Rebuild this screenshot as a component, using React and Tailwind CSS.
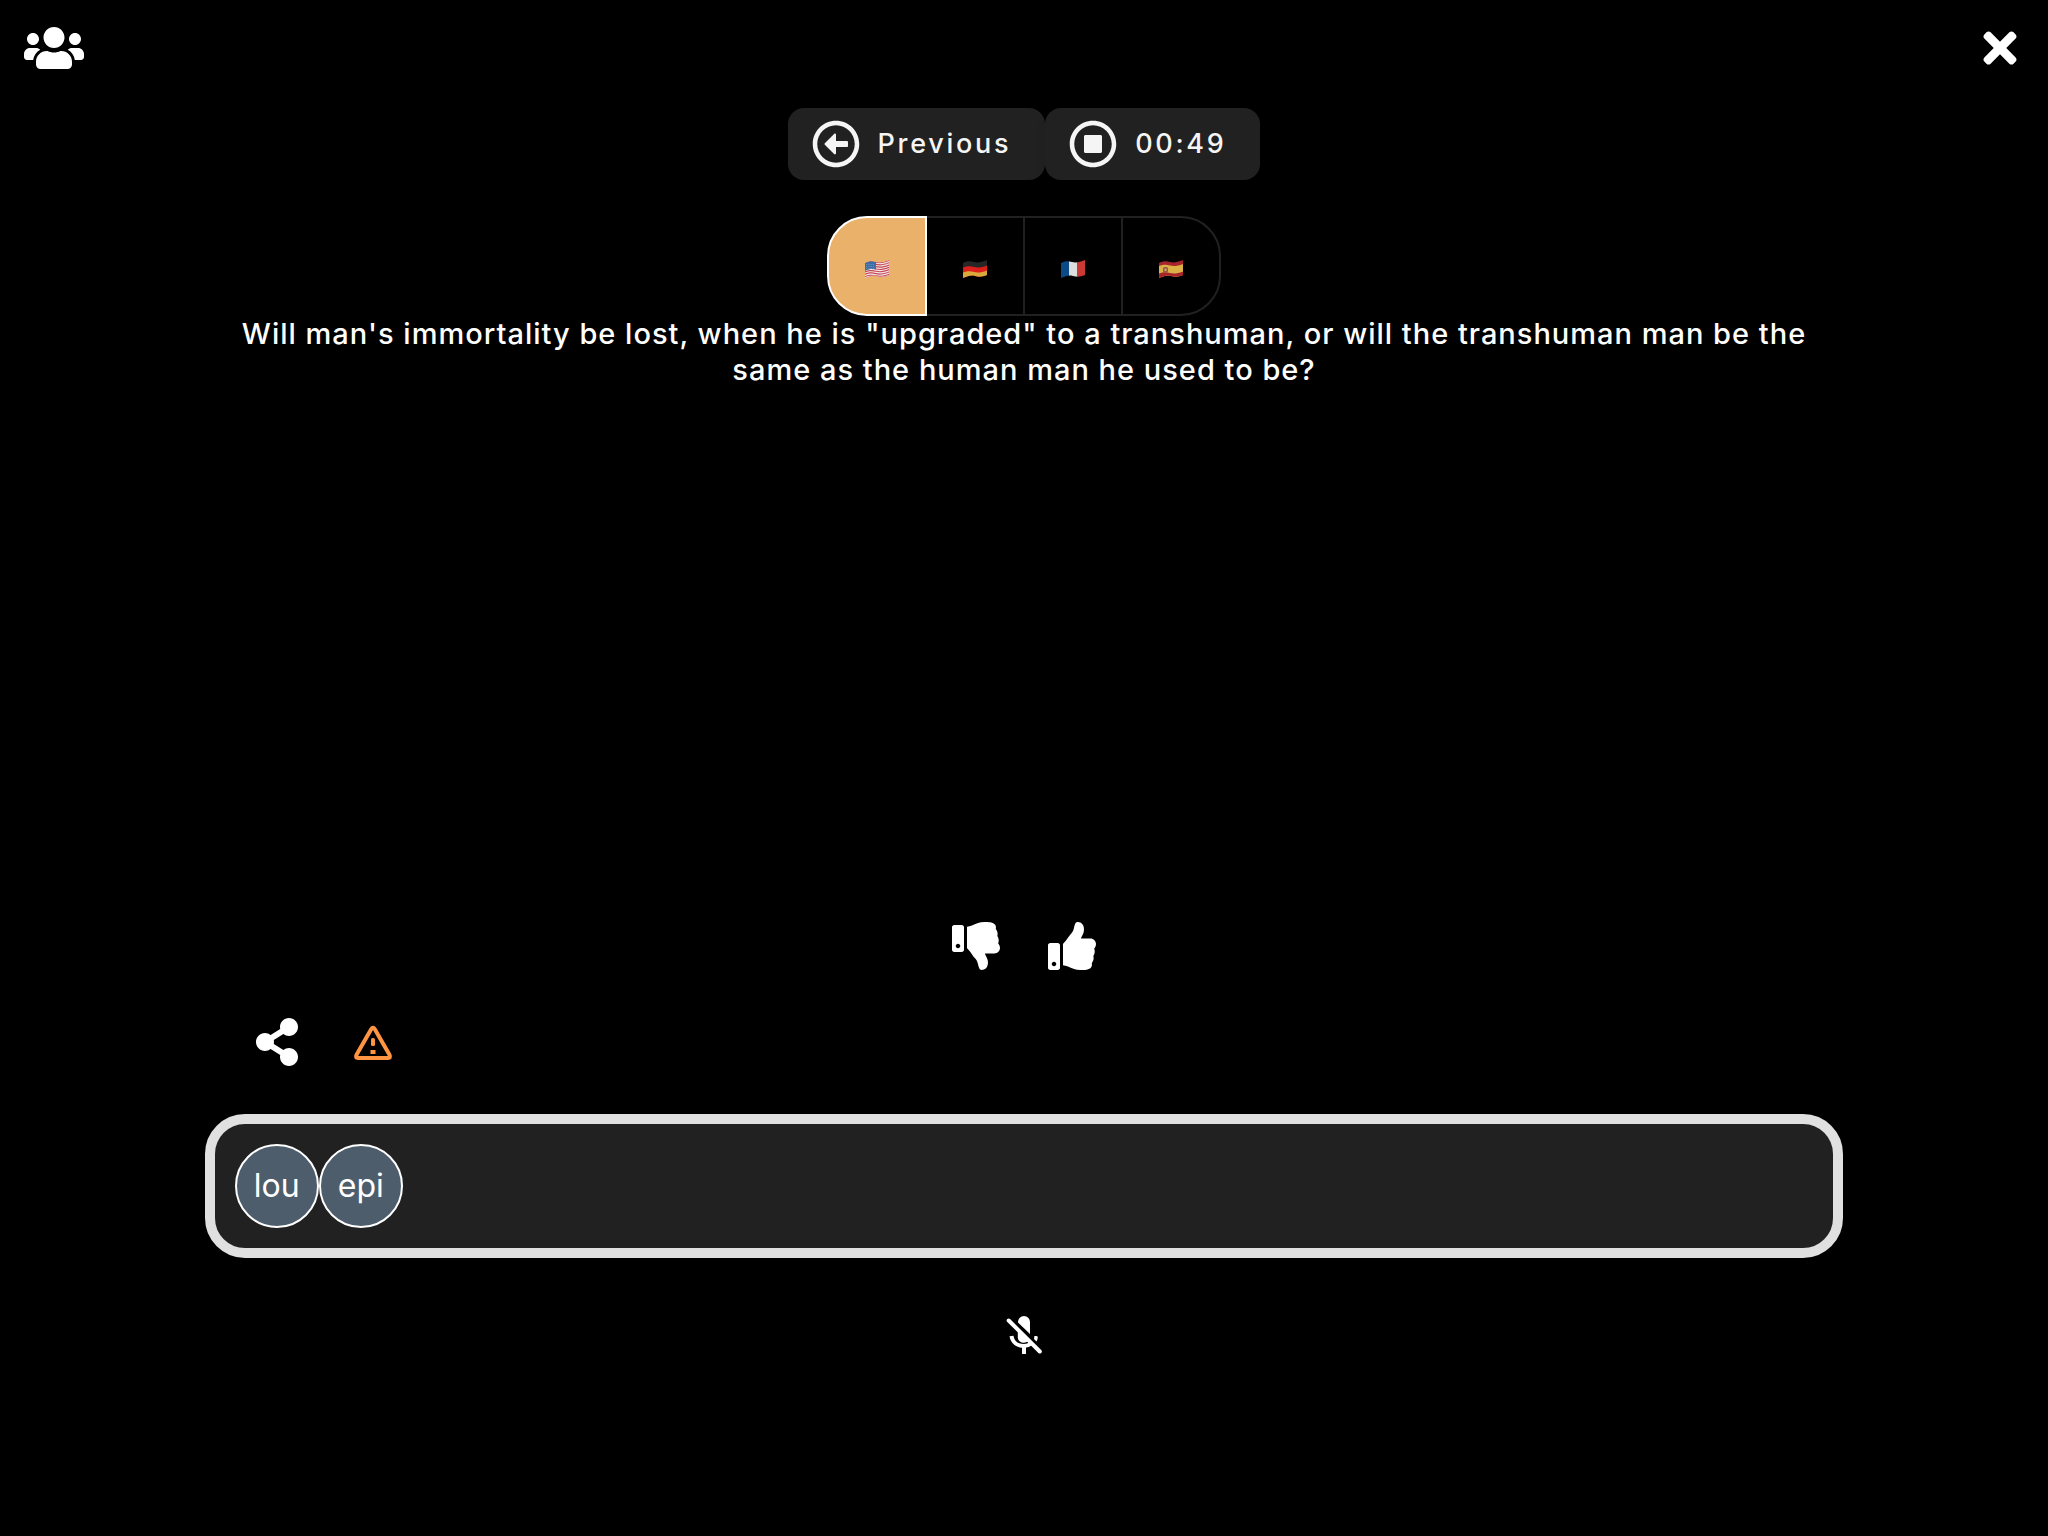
import {
  FaUsers,
  FaTimes,
  FaRegArrowAltCircleLeft,
  FaRegStopCircle,
  FaThumbsDown,
  FaThumbsUp,
  FaShareAlt,
} from "react-icons/fa";

const WAVE = "M1 3C5 1 8 1 12 2S20 2 25 0V15C20 17 17 17 13 16S6 16 1 18Z";

function Flag({ id, children }) {
  return (
    <svg viewBox="0 0 26 18" className="mt-1.5 h-[18px] w-[26px]" aria-hidden="true">
      <defs>
        <clipPath id={id}>
          <path d={WAVE} />
        </clipPath>
      </defs>
      <g clipPath={`url(#${id})`}>{children}</g>
    </svg>
  );
}

function wave(y) {
  return `M0 ${y + 2.5}C5 ${y + 0.5} 8 ${y + 0.5} 12 ${y + 1.5}S20 ${y + 2} 26 ${y - 0.5}V30H0Z`;
}

function FlagUS() {
  return (
    <Flag id="flag-us">
      <rect width="26" height="18" fill="#f0e9ea" />
      {[0, 1, 2, 3, 4, 5, 6].map((i) => (
        <g key={i}>
          <path d={wave(i * 2.3)} fill="#c8444f" />
          <path d={wave(i * 2.3 + 1.15)} fill="#f0e9ea" />
        </g>
      ))}
      <path d="M1 3C5 1 8 1 12 2V9.5C8 8.500 5 9 1 11Z" fill="#3c6ea5" />
      <path d="M2 4.500h9M2 6.500h9M2 8.500h9" stroke="#8fb0d0" strokeWidth="0.6" strokeDasharray="0.8 1" />
    </Flag>
  );
}

function FlagDE() {
  return (
    <Flag id="flag-de">
      <rect width="26" height="18" fill="#262626" />
      <path d={wave(5.5)} fill="#dc1f1b" />
      <path d={wave(10.5)} fill="#d9a93c" />
    </Flag>
  );
}

function FlagFR() {
  return (
    <Flag id="flag-fr">
      <rect width="9" height="18" fill="#0b4a86" />
      <rect x="9" width="8" height="18" fill="#dedede" />
      <rect x="17" width="9" height="18" fill="#c93a36" />
    </Flag>
  );
}

function FlagES() {
  return (
    <Flag id="flag-es">
      <rect width="26" height="18" fill="#a8242c" />
      <path d={wave(4)} fill="#dcb145" />
      <path d={wave(11.500)} fill="#a8242c" />
      <rect x="5" y="7" width="5" height="5.500" rx="1.500" fill="#9a5a3a" />
      <rect x="6.500" y="8.500" width="2" height="2.500" fill="#c9a58a" />
    </Flag>
  );
}

function WarningIcon() {
  return (
    <svg viewBox="0 0 48 48" className="size-12" fill="none" aria-hidden="true">
      <path
        d="M22.300 11.100Q24 8.300 25.700 11.100L40.600 37Q41.900 40 39 40H9Q6.100 40 7.400 37Z"
        stroke="#ff9543"
        strokeWidth="4"
        strokeLinejoin="round"
      />
      <rect x="22" y="20" width="4" height="8" rx="1.600" fill="#ff9543" />
      <rect x="21.500" y="32" width="5" height="4" fill="#ff9543" />
    </svg>
  );
}

function MicOffIcon() {
  return (
    <svg viewBox="0 0 48 48" className="size-12" fill="none" aria-hidden="true">
      <path
        d="M18 10a6 6 0 0 1 12 0V22L18 10.500ZM17.800 17.300L28.800 28A6 6 0 0 1 17.800 24Z"
        fill="#fff"
      />
      <path d="M11.500 24C12.500 30.500 17.500 34 24 34Q28 34 31 31.500" stroke="#fff" strokeWidth="4" />
      <path d="M24 34V42" stroke="#fff" strokeWidth="4" />
      <path d="M34.400 24H36.500Q38 24 37.800 25.500Q37.500 28 36.500 29.500L34 27Z" fill="#fff" />
      <path d="M8.700 8.500L39.800 39.500" stroke="#fff" strokeWidth="4" strokeLinecap="round" />
    </svg>
  );
}

function IconButton({ label, children }) {
  return (
    <button
      type="button"
      aria-label={label}
      className="flex size-24 items-center justify-center text-5xl"
    >
      {children}
    </button>
  );
}

function ControlButton({ icon, children }) {
  return (
    <button
      type="button"
      className="flex h-[72px] items-center gap-[18px] rounded-2xl bg-[#212121] pr-[34px] pl-6 text-[27px] font-medium tracking-widest text-[#f5f5f5] shadow-lg"
    >
      <span className="text-5xl">{icon}</span>
      {children}
    </button>
  );
}

const languages = [
  { name: "English", flag: <FlagUS />, style: "z-10 rounded-l-[40px] border-white bg-[#e9b16a]" },
  { name: "German", flag: <FlagDE />, style: "border-[#212121]" },
  { name: "French", flag: <FlagFR />, style: "border-[#212121]" },
  { name: "Spanish", flag: <FlagES />, style: "rounded-r-[40px] border-[#212121]" },
];

export default function App() {
  return (
    <div className="flex min-h-screen flex-col bg-black font-['Inter',sans-serif] text-white">
      <header className="flex items-center justify-between p-6">
        <button type="button" aria-label="Participants">
          <FaUsers className="h-12 w-[60px]" />
        </button>
        <button type="button" aria-label="Close" className="flex w-12 justify-center">
          <FaTimes className="size-12" />
        </button>
      </header>

      <main className="flex flex-1 flex-col px-[10%] pt-3">
        <div className="flex justify-center">
          <ControlButton icon={<FaRegArrowAltCircleLeft />}>Previous</ControlButton>
          <ControlButton icon={<FaRegStopCircle />}>00:49</ControlButton>
        </div>

        <div className="mt-9 flex justify-center -space-x-0.5">
          {languages.map(({ name, flag, style }) => (
            <button
              key={name}
              type="button"
              aria-label={name}
              className={`relative flex size-[100px] items-center justify-center border-2 ${style}`}
            >
              {flag}
            </button>
          ))}
        </div>

        <p className="px-6 text-center text-[29px] leading-9 font-medium tracking-[1px]">
          Will man's immortality be lost, when he is "upgraded" to a transhuman, or will the
          transhuman man be the same as the human man he used to be?
        </p>

        <div className="mt-auto flex justify-center">
          <IconButton label="Dislike">
            <FaThumbsDown />
          </IconButton>
          <IconButton label="Like">
            <FaThumbsUp />
          </IconButton>
        </div>

        <div className="flex px-6">
          <IconButton label="Share">
            <FaShareAlt />
          </IconButton>
          <IconButton label="Report">
            <WarningIcon />
          </IconButton>
        </div>

        <ul className="mt-6 flex rounded-[40px] border-10 border-[#e0e0e0] bg-[#212121] p-5">
          {["lou", "epi"].map((name) => (
            <li
              key={name}
              className="flex size-[84px] items-center justify-center rounded-full border-2 border-white bg-[#4e5d6c] text-[32px]"
            >
              {name}
            </li>
          ))}
        </ul>
      </main>

      <footer className="flex justify-center pt-[30px] pb-[152px]">
        <IconButton label="Unmute microphone">
          <MicOffIcon />
        </IconButton>
      </footer>
    </div>
  );
}
